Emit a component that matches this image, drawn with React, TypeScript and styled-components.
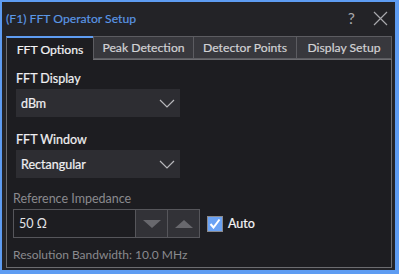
import React from "react";
import styled, { createGlobalStyle } from "styled-components";

const Global = createGlobalStyle`
  html, body { margin: 0; padding: 0; background: #1c1c20; }
  body { font-family: Lato, "Liberation Sans", sans-serif; }
  * { box-sizing: border-box; }
`;

const Window = styled.div`
  width: 399px;
  height: 274px;
  border-style: solid;
  border-color: #5e9cf2;
  border-width: 2px 4px 4px 2px;
  background: #232327;
  display: flex;
  flex-direction: column;
`;

const TitleBar = styled.div`
  height: 32px;
  display: flex;
  align-items: center;
  justify-content: space-between;
  padding: 0 7px 0 4px;
`;

const Title = styled.div`
  color: #5b98e6;
  font-size: 12.2px;
  -webkit-text-stroke: 0.15px #5b98e6;
`;

const TitleButtons = styled.div`
  display: flex;
  align-items: center;
  gap: 18px;
  color: #a8a8ac;
`;

const HelpGlyph = styled.span`
  font-size: 16px;
  line-height: 1;
`;

const Body = styled.div`
  flex: 1;
  display: flex;
  flex-direction: column;
  padding: 2px 3px 2px 4px;
`;

const TabRow = styled.div`
  display: flex;
  height: 23px;
  position: relative;
  z-index: 1;
`;

const Tab = styled.div<{ $active?: boolean; $w: number }>`
  width: ${(p) => p.$w}px;
  height: ${(p) => (p.$active ? 24 : 23)}px;
  display: flex;
  align-items: center;
  justify-content: center;
  font-size: 12.2px;
  color: ${(p) => (p.$active ? "#f4f4f6" : "#d2d2d5")};
  -webkit-text-stroke: 0.2px ${(p) => (p.$active ? "#f4f4f6" : "#d2d2d5")};
  background: ${(p) => (p.$active ? "#1d1d21" : "#38383d")};
  border: 1px solid ${(p) => (p.$active ? "#6c6c70" : "#5c5c61")};
  border-top: ${(p) => (p.$active ? "2px solid #5e9cf2" : "1px solid #5c5c61")};
  border-bottom: ${(p) => (p.$active ? "none" : "1px solid #5c5c61")};
  & + & { margin-left: -1px; }
`;

const Panel = styled.div`
  flex: 1;
  background: #1d1d21;
  border: 1px solid #6c6c70;
  padding: 11px 8px 0 9px;
  display: flex;
  flex-direction: column;
`;

const Field = styled.div<{ $gap: number; $indent?: number }>`
  display: flex;
  flex-direction: column;
  margin-top: ${(p) => p.$gap}px;
  margin-left: ${(p) => -(p.$indent ?? 0)}px;
`;

const Label = styled.div<{ $dim?: boolean }>`
  font-size: 12.5px;
  line-height: 15px;
  color: ${(p) => (p.$dim ? "#8a8a8e" : "#f0f0f2")};
  -webkit-text-stroke: 0.2px ${(p) => (p.$dim ? "transparent" : "#f0f0f2")};
  margin-bottom: 3px;
`;

const Select = styled.div`
  width: 164px;
  height: 28px;
  background: #2d2d32;
  display: flex;
  align-items: center;
  justify-content: space-between;
  padding: 0 5px 0 5px;
  color: #f0f0f2;
  -webkit-text-stroke: 0.2px #f0f0f2;
  font-size: 12.5px;
`;

const Row = styled.div`
  display: flex;
  align-items: center;
`;

const Input = styled.div`
  width: 123px;
  height: 29px;
  border: 1px solid #56565b;
  background: #1d1d21;
  color: #e4e4e7;
  font-size: 12.5px;
  display: flex;
  align-items: center;
  padding-left: 5px;
`;

const StepButton = styled.div`
  width: 33px;
  height: 29px;
  margin-left: -1px;
  border: 1px solid #56565b;
  background: #323237;
  display: flex;
  align-items: center;
  justify-content: center;
`;

const Check = styled.div`
  width: 16px;
  height: 16px;
  margin-left: 7px;
  background: #6aa2f4;
  border: 1px solid #8a8a8e;
  display: flex;
  align-items: center;
  justify-content: center;
`;

const CheckLabel = styled.span`
  color: #f4f4f6;
  -webkit-text-stroke: 0.2px #f4f4f6;
  font-size: 12.5px;
  margin-left: 5px;
`;

const Info = styled.div`
  margin-top: 9px;
  margin-left: -3px;
  font-size: 12px;
  line-height: 15px;
  color: #8a8a8e;
`;

const Chevron = () => (
  <svg width="16" height="9" viewBox="0 0 16 9">
    <path d="M1 1 L8 8 L15 1" fill="none" stroke="#b8b8bc" strokeWidth="1.2" />
  </svg>
);

const Triangle = ({ up }: { up?: boolean }) => (
  <svg width="18" height="8" viewBox="0 0 18 8">
    <path d={up ? "M0 8 L9 0 L18 8 Z" : "M0 0 L9 8 L18 0 Z"} fill="#68686d" />
  </svg>
);

export default function App() {
  return (
    <>
      <Global />
      <Window>
        <TitleBar>
          <Title>(F1) FFT Operator Setup</Title>
          <TitleButtons>
            <HelpGlyph>?</HelpGlyph>
            <svg width="15" height="15" viewBox="0 0 15 15">
              <path d="M1 1 L14 14 M14 1 L1 14" stroke="#a8a8ac" strokeWidth="1.2" />
            </svg>
          </TitleButtons>
        </TitleBar>
        <Body>
          <TabRow>
            <Tab $active $w={88}>FFT Options</Tab>
            <Tab $w={101}>Peak Detection</Tab>
            <Tab $w={104}>Detector Points</Tab>
            <Tab $w={96}>Display Setup</Tab>
          </TabRow>
          <Panel>
            <Field $gap={0}>
              <Label>FFT Display</Label>
              <Select>
                dBm
                <Chevron />
              </Select>
            </Field>
            <Field $gap={15}>
              <Label>FFT Window</Label>
              <Select>
                Rectangular
                <Chevron />
              </Select>
            </Field>
            <Field $gap={13} $indent={3}>
              <Label $dim>Reference Impedance</Label>
              <Row>
                <Input>50 Ω</Input>
                <StepButton>
                  <Triangle />
                </StepButton>
                <StepButton>
                  <Triangle up />
                </StepButton>
                <Check>
                  <svg width="12" height="11" viewBox="0 0 12 11">
                    <path d="M1.5 6 L4.5 9.5 L10.5 1.5" fill="none" stroke="#ffffff" strokeWidth="2" />
                  </svg>
                </Check>
                <CheckLabel>Auto</CheckLabel>
              </Row>
            </Field>
            <Info>Resolution Bandwidth: 10.0 MHz</Info>
          </Panel>
        </Body>
      </Window>
    </>
  );
}
